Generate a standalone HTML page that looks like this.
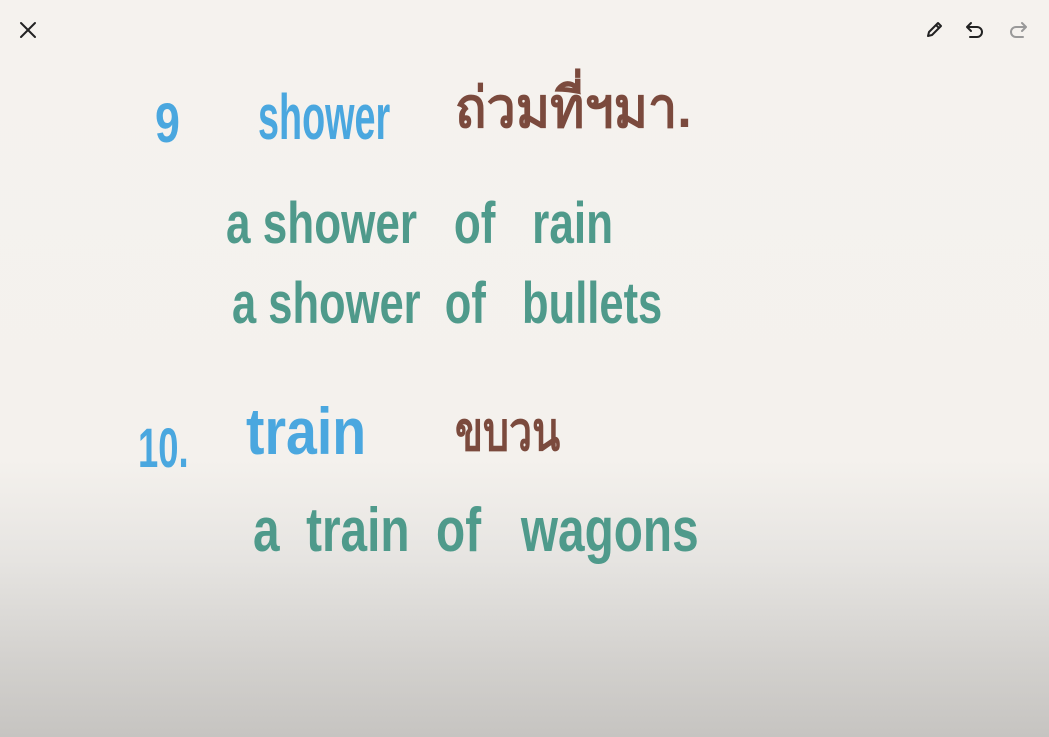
<!DOCTYPE html>
<html><head><meta charset="utf-8"><style>
html,body{margin:0;padding:0}
body{width:1049px;height:737px;overflow:hidden;position:relative;
background:linear-gradient(to bottom,#f5f2ee 0px,#f4f1ed 460px,#e6e4e1 560px,#d3d1ce 660px,#c6c4c1 737px);
font-family:"Liberation Sans Narrow","Liberation Sans","Noto Sans CJK SC",sans-serif;}
.t{position:absolute;white-space:nowrap;font-weight:bold;transform-origin:0 0;line-height:1;}
.b{color:#4aa7df}.g{color:#4f9a8b}.r{color:#7b4a3d}
</style></head><body>
<svg style="position:absolute;left:18px;top:20px" width="20" height="20" viewBox="0 0 20 20"><path d="M3 3L17 17M17 3L3 17" stroke="#222" stroke-width="2" stroke-linecap="round"/></svg>
<svg style="position:absolute;left:923px;top:19px" width="22" height="22" viewBox="0 0 22 22"><path d="M5 17l1-4 9-9 3 3-9 9z M13 6l3 3" fill="none" stroke="#222" stroke-width="2" stroke-linejoin="round"/></svg>
<svg style="position:absolute;left:963px;top:19px" width="24" height="22" viewBox="0 0 24 22"><path d="M8 4L4 8l4 4M4 8h10a5 5 0 010 10H7" fill="none" stroke="#222" stroke-width="2" stroke-linecap="round" stroke-linejoin="round"/></svg>
<svg style="position:absolute;left:1006px;top:19px" width="24" height="22" viewBox="0 0 24 22"><path d="M16 4l4 4-4 4M20 8H10a5 5 0 000 10h7" fill="none" stroke="#999" stroke-width="2" stroke-linecap="round" stroke-linejoin="round"/></svg>

<div class="t b" style="left:155px;top:95px;font-size:56px;transform:scaleX(.8)">9</div>
<div class="t b" style="left:258px;top:85px;font-size:64px;transform:scaleX(.59)">shower</div>
<div class="t r" style="left:455px;top:80px;font-size:56px;font-family:'Liberation Sans','Noto Sans CJK SC',sans-serif;transform:scaleX(.93)">ถ่วมที่ฯมา.</div>

<div class="t g" style="left:226px;top:195px;font-size:58px;transform:scaleX(.76)">a shower&nbsp;&nbsp; of&nbsp;&nbsp; rain</div>
<div class="t g" style="left:232px;top:275px;font-size:58px;transform:scaleX(.75)">a shower&nbsp; of&nbsp;&nbsp; bullets</div>

<div class="t b" style="left:138px;top:420px;font-size:56px;transform:scaleX(.65)">10.</div>
<div class="t b" style="left:246px;top:398px;font-size:66px;transform:scaleX(.84)">train</div>
<div class="t r" style="left:455px;top:405px;font-size:54px;font-family:'Liberation Sans',sans-serif;transform:scaleX(.76)">ขบวน</div>

<div class="t g" style="left:253px;top:500px;font-size:62px;transform:scaleX(.77)">a&nbsp; train&nbsp; of&nbsp;&nbsp; wagons</div>
</body></html>
